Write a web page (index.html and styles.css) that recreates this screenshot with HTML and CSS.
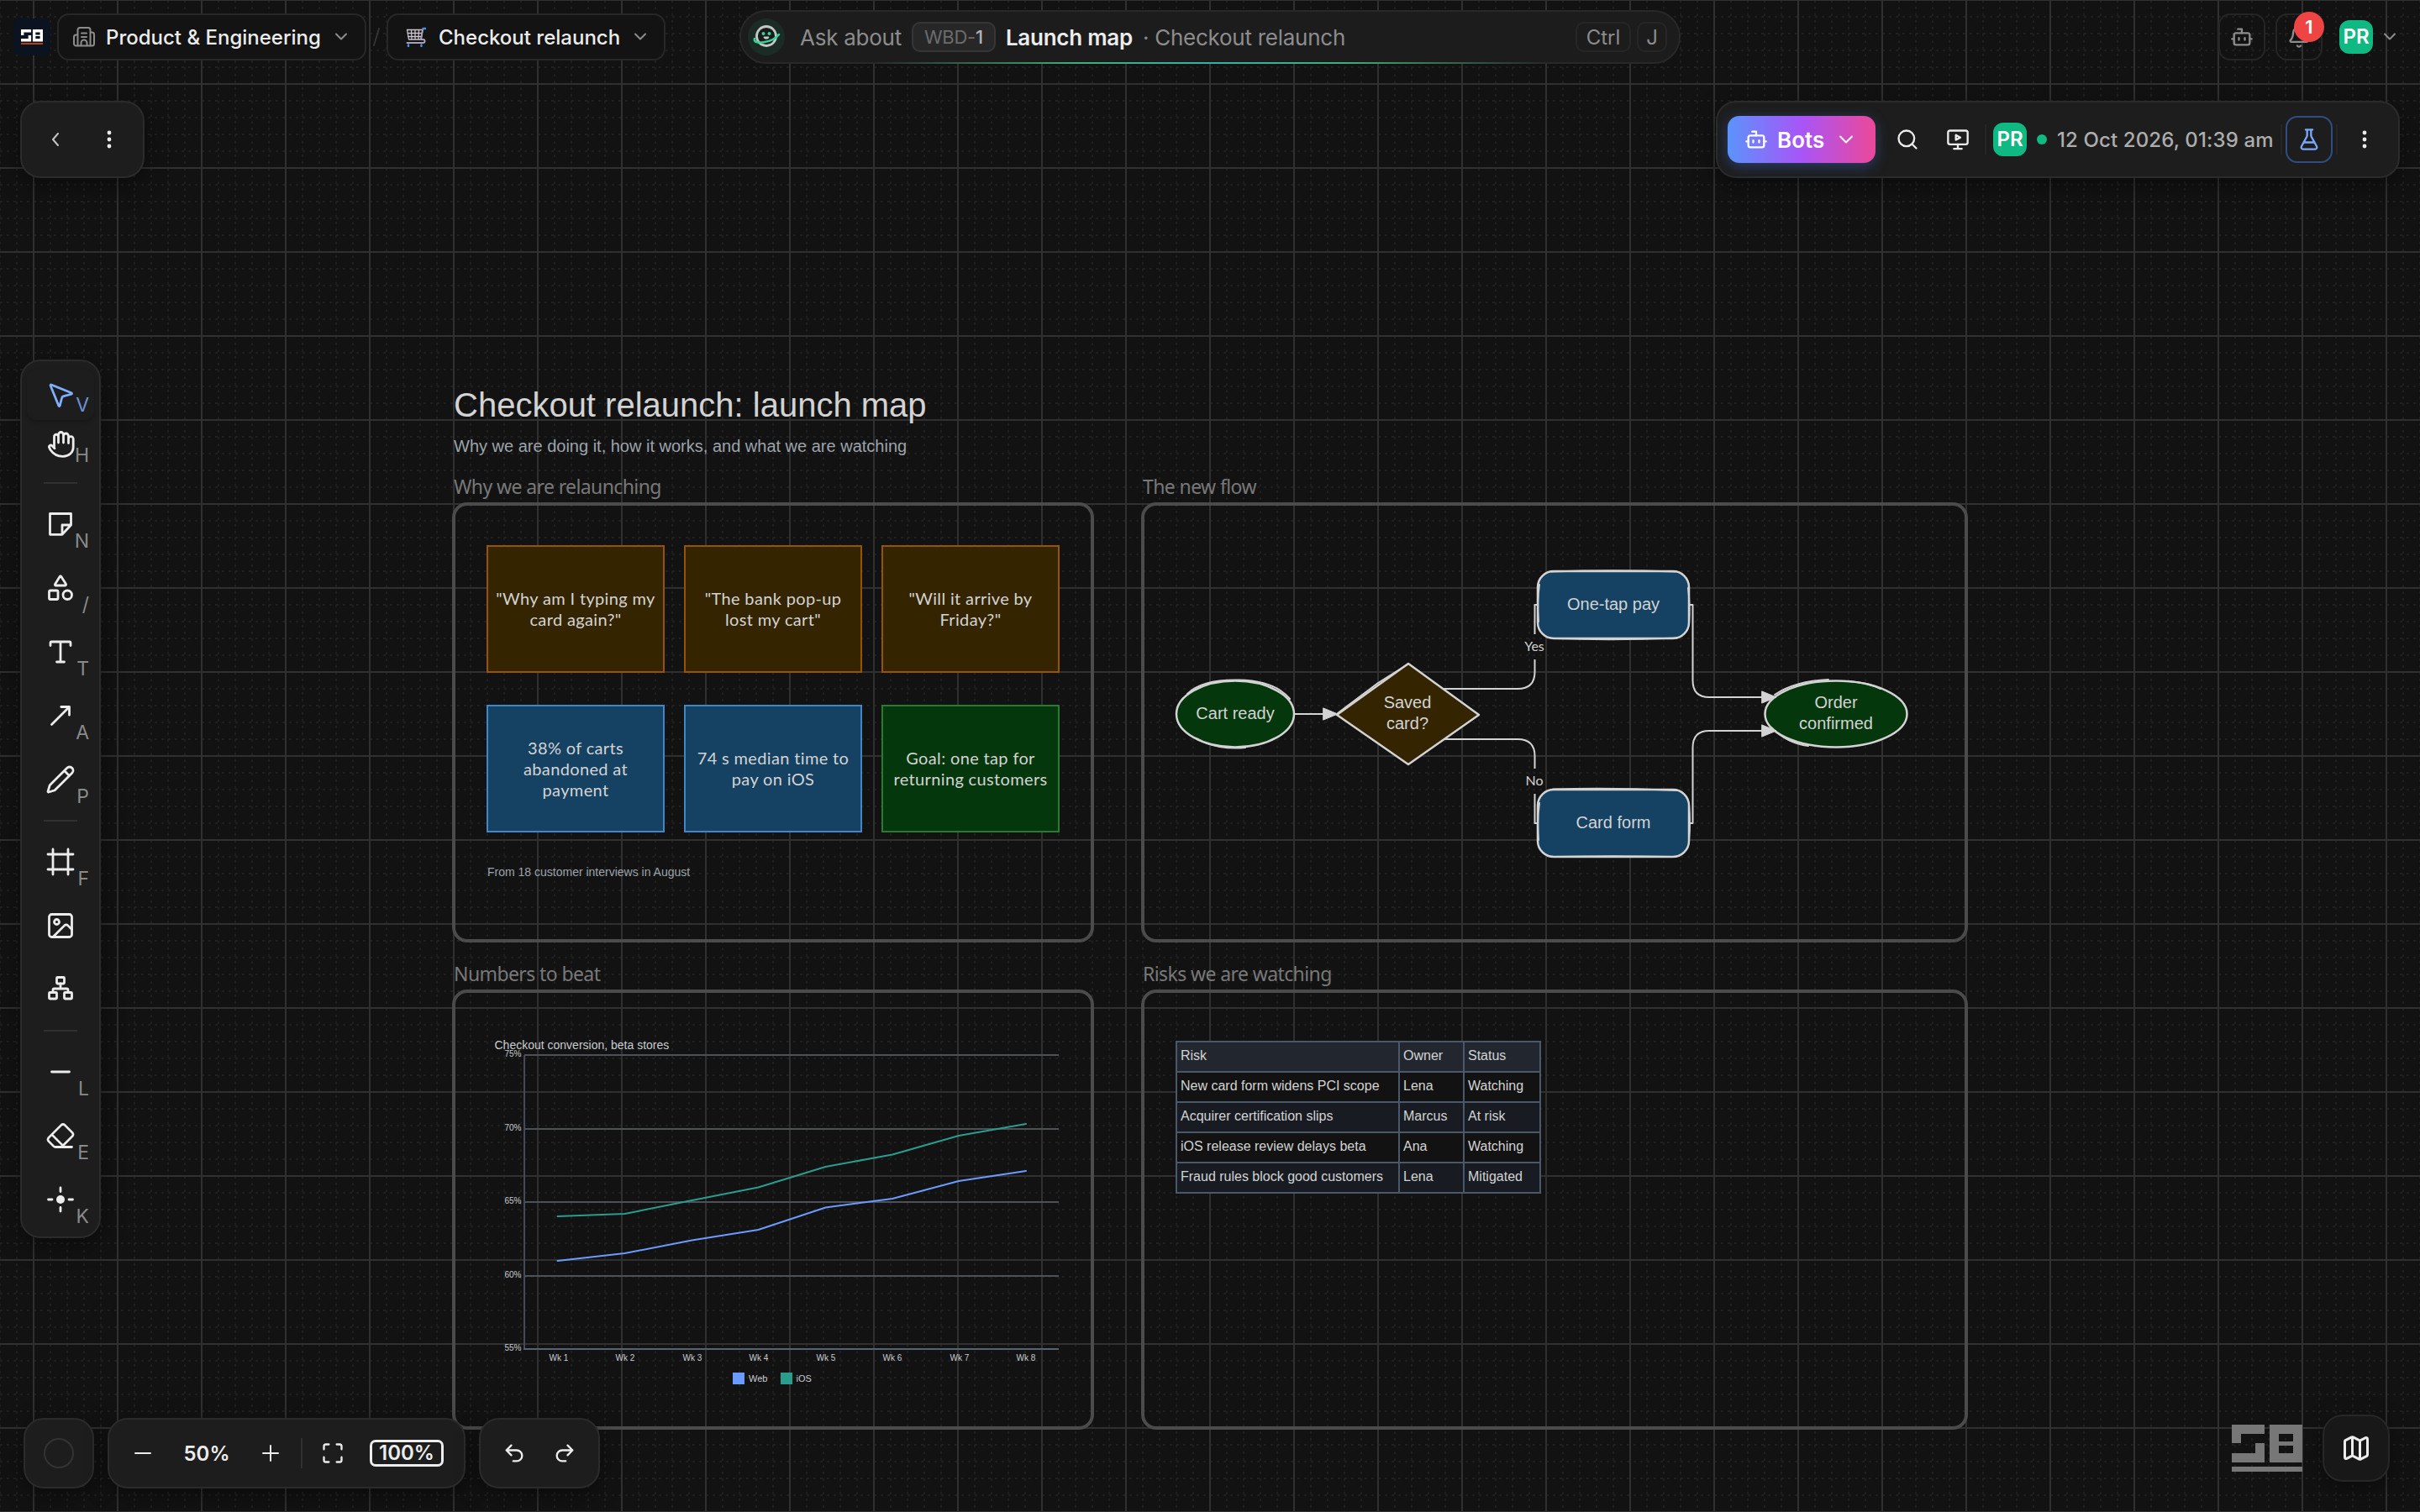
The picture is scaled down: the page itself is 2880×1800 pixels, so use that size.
FILE: index.html
```html
<!DOCTYPE html>
<html lang="en">

<head>
  <meta charset="utf-8">
  <title>Launch map</title>
  <link rel="stylesheet" href="styles.css">
</head>

<body>
  <main class="whiteboard">
    <!-- background grid -->
    <svg class="grid" width="2880" height="1800">
      <defs>
        <pattern id="minor" x="-10" y="-10" width="40" height="40" patternUnits="userSpaceOnUse">
          <path class="grid-minor" d="M10 0V40M30 0V40M0 10H40M0 30H40" />
        </pattern>
        <pattern id="major" x="-10" y="-50" width="100" height="100" patternUnits="userSpaceOnUse">
          <path class="grid-major" d="M50 0V100M0 50H100" />
        </pattern>
      </defs>
      <rect class="grid-fill" width="2880" height="1800" fill="url(#minor)" />
      <rect class="grid-fill" width="2880" height="1800" fill="url(#major)" />
    </svg>

    <!-- board content -->
    <h1 class="board-title">Checkout relaunch: launch map</h1>
    <p class="board-subtitle">Why we are doing it, how it works, and what we are watching</p>

    <section class="frame frame-why">
      <h2 class="frame-name">Why we are relaunching</h2>
      <div class="notes">
        <div class="note note-orange">"Why am I typing my<br>card again?"</div>
        <div class="note note-orange">"The bank pop-up<br>lost my cart"</div>
        <div class="note note-orange">"Will it arrive by<br>Friday?"</div>
        <div class="note note-blue">38% of carts<br>abandoned at<br>payment</div>
        <div class="note note-blue">74 s median time to<br>pay on iOS</div>
        <div class="note note-green">Goal: one tap for<br>returning customers</div>
      </div>
      <p class="caption">From 18 customer interviews in August</p>
    </section>

    <section class="frame frame-flow">
      <h2 class="frame-name">The new flow</h2>
      <svg class="flow" width="920" height="380" viewBox="1380 660 920 380">
        <g class="edges">
          <path d="M1541 850H1578" />
          <path d="M1718 820H1806Q1826.500 820 1826.500 800V785M1826.500 755V720H1831" />
          <path d="M1718 880H1806Q1826.500 880 1826.500 900V915M1826.500 945V980H1831" />
          <path d="M2009 720H2014.500V810Q2014.500 830 2034 830H2098" />
          <path d="M2009 980H2014.500V890Q2014.500 870 2034 870H2098" />
        </g>
        <g class="shapes">
          <ellipse class="fill-green" cx="1470" cy="850" rx="70" ry="39.500" />
          <path class="sketch" d="M1413 826C1426 813 1448 809 1474 809.500S1522 816 1535 832M1424 879C1440 889 1462 892 1482 890" />
          <path class="fill-brown" d="M1676 790L1760 851L1676 910L1591 851Z" />
          <path class="sketch" d="M1592 849L1640 813L1675 791" />
          <rect class="fill-blue" x="1830" y="680" width="180" height="80" rx="19" />
          <path class="sketch" d="M1846 680.500Q1920 678 1994 680.500M1850 760Q1920 762.500 1996 759.500M1831 740Q1829 716 1832 696M2010 742Q2011.500 720 2009 700" />
          <rect class="fill-blue" x="1830" y="940" width="180" height="80" rx="19" />
          <path class="sketch" d="M1848 939.500Q1920 937.500 1996 941M1850 1020Q1920 1018.500 1990 1020M1831 1000Q1829 976 1832 956M2010 1000Q2012 980 2010 958" />
          <ellipse class="fill-green" cx="2185" cy="850" rx="84.500" ry="39.500" />
          <path class="sketch" d="M2112 827C2130 815 2152 810 2176 809M2200 811C2214 812 2228 815 2238 820M2108 866C2122 880 2136 886 2152 888" />
        </g>
        <g class="heads">
          <path d="M1575 843L1592 850L1575 857Z" />
          <path d="M2097 823L2114 830L2097 837Z" />
          <path d="M2097 863L2114 870L2097 877Z" />
        </g>
        <g class="labels">
          <text x="1470" y="856">Cart ready</text>
          <text x="1675" y="843">Saved</text>
          <text x="1675" y="868">card?</text>
          <text x="1920" y="726">One-tap pay</text>
          <text x="1920" y="986">Card form</text>
          <text x="2185" y="843">Order</text>
          <text x="2185" y="868">confirmed</text>
          <text class="edge-label" x="1826" y="775">Yes</text>
          <text class="edge-label" x="1826" y="935">No</text>
        </g>
      </svg>
    </section>

    <section class="frame frame-numbers">
      <h2 class="frame-name">Numbers to beat</h2>
      <svg class="chart" width="700" height="430" viewBox="580 1230 700 430">
        <g class="chart-lines">
          <path d="M624 1256H1260M624 1344H1260M624 1431H1260M624 1519H1260" />
          <path class="axis-y" d="M624 1256V1606" />
          <path class="axis-x" d="M623 1606H1260" />
        </g>
        <polyline class="series series-ios" points="663.500,1448 743.500,1445 823.500,1429 902.500,1413.500 982.500,1389 1062,1374.500 1141,1352 1221,1338" />
        <polyline class="series series-web" points="663.500,1501 743.500,1492 823.500,1476.500 902.500,1464 982.500,1437.500 1062,1427 1141,1406 1221,1394" />
        <text class="chart-title" x="588.500" y="1249">Checkout conversion, beta stores</text>
        <g class="ticks-y">
          <text x="620.500" y="1258">75%</text>
          <text x="620.500" y="1346">70%</text>
          <text x="620.500" y="1433">65%</text>
          <text x="620.500" y="1521">60%</text>
          <text x="620.500" y="1608">55%</text>
        </g>
        <g class="ticks-x">
          <text x="665" y="1620">Wk 1</text>
          <text x="744" y="1620">Wk 2</text>
          <text x="824" y="1620">Wk 3</text>
          <text x="903" y="1620">Wk 4</text>
          <text x="983" y="1620">Wk 5</text>
          <text x="1062" y="1620">Wk 6</text>
          <text x="1142" y="1620">Wk 7</text>
          <text x="1221" y="1620">Wk 8</text>
        </g>
        <rect class="swatch-web" x="872" y="1634" width="14" height="14" />
        <text class="legend" x="891" y="1645">Web</text>
        <rect class="swatch-ios" x="929" y="1634" width="14" height="14" />
        <text class="legend" x="947.500" y="1645">iOS</text>
      </svg>
    </section>

    <section class="frame frame-risks">
      <h2 class="frame-name">Risks we are watching</h2>
      <table class="risks">
        <colgroup>
          <col class="col-risk">
          <col class="col-owner">
          <col class="col-status">
        </colgroup>
        <tr><th>Risk</th><th>Owner</th><th>Status</th></tr>
        <tr><td>New card form widens PCI scope</td><td>Lena</td><td>Watching</td></tr>
        <tr><td>Acquirer certification slips</td><td>Marcus</td><td>At risk</td></tr>
        <tr><td>iOS release review delays beta</td><td>Ana</td><td>Watching</td></tr>
        <tr><td>Fraud rules block good customers</td><td>Lena</td><td>Mitigated</td></tr>
      </table>
    </section>

    <!-- top bar -->
    <header class="topbar">
      <div class="crumbs">
        <div class="logo">
          <svg width="26" height="18" viewBox="0 0 84 56" preserveAspectRatio="none">
            <path fill="#fff" fill-rule="evenodd" d="M0 0H39V11H11V22H0ZM28 22H39V45H0V34H28ZM45 0H84V45H45ZM56 11V20H73V11ZM56 25V34H73V25Z" />
            <path fill="#c2410c" d="M0 50H84V56H0Z" />
          </svg>
        </div>
        <button class="crumb crumb-org">
          <svg class="muted" width="26" height="24" viewBox="0 0 26 24">
            <path d="M5.500 22.500V3.500A2.500 2.500 0 0 1 8 1H18a2.500 2.500 0 0 1 2.500 2.500v19M5.500 9.500h-2A2.500 2.500 0 0 0 1 12v8a2.500 2.500 0 0 0 2.500 2.500h19A2.500 2.500 0 0 0 25 20V9a2.500 2.500 0 0 0-2.500-2.500h-2M10 7.500h6M10 12h6M9.500 22.500V19a3 3 0 0 1 7 0v3.500" />
          </svg>
          <span>Product &amp; Engineering</span>
          <svg class="muted chevron" width="16" height="10" viewBox="0 0 16 10"><path d="M2 1.500L8 7.500L14 1.500" /></svg>
        </button>
        <svg class="slash" width="8" height="22" viewBox="0 0 8 22"><path d="M7 1L1 21" /></svg>
        <button class="crumb crumb-project">
          <svg class="cart" width="24" height="24" viewBox="0 0 24 24">
            <path stroke="#c9c4cf" d="M1.500 3.500H20L18 15H3.500ZM2 7.500h17M2.500 11.500h16M6.500 3.500l.5 11.500M11 3.500V15M15.500 3.500L15 15" />
            <path stroke="#a9a0b8" stroke-width="2" d="M20 3.500L18 15h2.500a1.500 1.500 0 0 1 0 4H1.500" />
            <path stroke="#4a90e2" stroke-width="2.400" d="M20.500 2h3M3 21.500v1.500M18.500 21.500v1.500" />
          </svg>
          <span>Checkout relaunch</span>
          <svg class="muted chevron" width="16" height="10" viewBox="0 0 16 10"><path d="M2 1.500L8 7.500L14 1.500" /></svg>
        </button>
      </div>

      <div class="ask">
        <svg class="mascot" width="44" height="44" viewBox="0 0 44 44">
          <circle cx="22" cy="22" r="22" fill="#1b2c26" stroke="none" />
          <circle cx="22" cy="21" r="11.500" fill="#171c1a" stroke="#c4c9c7" stroke-width="2.800" />
          <path stroke="#34d399" stroke-width="2.500" d="M8 24C5 32 30 29 37 19" />
          <circle cx="18.500" cy="18" r="2" fill="#34d399" stroke="none" />
          <circle cx="25.500" cy="18" r="2" fill="#34d399" stroke="none" />
          <path stroke="#c4c9c7" stroke-width="1.800" d="M19.500 22.500a2.800 2.500 0 0 0 5 0Z" />
        </svg>
        <span class="ask-hint">Ask about</span>
        <span class="ask-chip">WBD-<b>1</b></span>
        <span class="ask-name">Launch map</span>
        <span class="ask-hint ask-project">· Checkout relaunch</span>
        <kbd class="kbd kbd-ctrl">Ctrl</kbd>
        <kbd class="kbd kbd-j">J</kbd>
      </div>

      <div class="account">
        <button class="icon-btn">
          <svg class="muted" width="28" height="28" viewBox="0 0 24 24"><path d="M12 8V4H8M2 14h2M20 14h2M15 13v2M9 13v2" /><rect x="4" y="8" width="16" height="12" rx="2" /></svg>
        </button>
        <button class="icon-btn icon-btn-bell">
          <svg class="muted" width="28" height="28" viewBox="0 0 24 24"><path d="M10.270 21a2 2 0 0 0 3.460 0M3.260 15.330A1 1 0 0 0 4 17h16a1 1 0 0 0 .74-1.670C19.410 13.960 18 12.500 18 8A6 6 0 0 0 6 8c0 4.500-1.410 5.960-2.740 7.330" /></svg>
          <span class="badge">1</span>
        </button>
        <span class="avatar">PR</span>
        <svg class="muted" width="16" height="10" viewBox="0 0 16 10"><path d="M2 1.500L8 7.500L14 1.500" /></svg>
      </div>
    </header>

    <!-- floating panels -->
    <div class="panel panel-back">
      <svg class="soft" width="12" height="18" viewBox="0 0 12 18"><path d="M9 2L3 9L9 16" /></svg>
      <svg class="dots" width="6" height="24" viewBox="0 0 6 24"><circle cx="3" cy="4" r="2.400" /><circle cx="3" cy="12" r="2.400" /><circle cx="3" cy="20" r="2.400" /></svg>
    </div>

    <div class="panel panel-actions">
      <button class="bots">
        <svg width="28" height="28" viewBox="0 0 24 24"><path d="M12 8V4H8M2 14h2M20 14h2M15 13v2M9 13v2" /><rect x="4" y="8" width="16" height="12" rx="2" /></svg>
        <span>Bots</span>
        <svg width="18" height="11" viewBox="0 0 18 11"><path d="M2 1.500L9 8.500L16 1.500" /></svg>
      </button>
      <i class="divider"></i>
      <svg class="act-search" width="28" height="28" viewBox="0 0 24 24"><circle cx="11" cy="11" r="8" /><path d="M21 21l-4.300-4.300" /></svg>
      <svg class="act-present" width="28" height="28" viewBox="0 0 24 24"><rect x="2" y="3" width="20" height="14" rx="2" /><path d="M10 7.500v5l4.500-2.500ZM12 17v4M8 21.500h8" /></svg>
      <i class="divider"></i>
      <span class="avatar">PR</span>
      <span class="online"></span>
      <time class="stamp">12 Oct 2026, 01:39 am</time>
      <i class="divider"></i>
      <button class="lab">
        <svg width="28" height="28" viewBox="0 0 24 24"><path d="M14 2v6a2 2 0 0 0 .245.960l5.510 10.080A2 2 0 0 1 18 22H6a2 2 0 0 1-1.755-2.960l5.510-10.080A2 2 0 0 0 10 8V2M6.453 15h11.094M8.500 2h7" /></svg>
      </button>
      <i class="divider"></i>
      <svg class="dots" width="6" height="24" viewBox="0 0 6 24"><circle cx="3" cy="4" r="2.400" /><circle cx="3" cy="12" r="2.400" /><circle cx="3" cy="20" r="2.400" /></svg>
    </div>

    <nav class="panel tools">
      <button class="tool tool-short tool-active">
        <svg width="36" height="36" viewBox="0 0 24 24"><path d="M4.037 4.688a.495.495 0 0 1 .651-.651l16 6.500a.5.5 0 0 1-.063.947l-6.124 1.580a2 2 0 0 0-1.438 1.435l-1.579 6.126a.5.5 0 0 1-.947.063z" /></svg>
        <span class="key">V</span>
      </button>
      <button class="tool tool-short">
        <svg class="px" width="36" height="36" viewBox="0 0 36 36"><path d="M10.500 21.500V8a2.400 2.400 0 0 1 5-.5V15M15.500 7.500V5.500a3 3 0 0 1 6 0V15M21.500 7a3 3 0 0 1 6 0v8.500M27.500 10.500a2.800 2.800 0 0 1 5.700 0V20c0 7-5.500 11.300-12.200 11.300C13 31.300 9 28 6 23.500L4.800 21.200c-1.300-2.600 1.500-4.200 3.200-2.500l3 3" /></svg>
        <span class="key">H</span>
      </button>
      <hr>
      <button class="tool">
        <svg class="px" width="36" height="36" viewBox="0 0 36 36"><path d="M5.500 5.500H30.500V19L20 30.300H5.500ZM30.500 19H20V30" /></svg>
        <span class="key">N</span>
      </button>
      <button class="tool">
        <svg width="36" height="36" viewBox="0 0 24 24"><path d="M8.300 10a.7.7 0 0 1-.626-1.079L11.400 3a.7.7 0 0 1 1.198-.043L16.300 8.900a.7.7 0 0 1-.572 1.100Z" /><rect x="3" y="14" width="7" height="7" rx="1" /><circle cx="17.500" cy="17.500" r="3.500" /></svg>
        <span class="key">/</span>
      </button>
      <button class="tool">
        <svg width="36" height="36" viewBox="0 0 24 24"><path d="M4 7V5a1 1 0 0 1 1-1h14a1 1 0 0 1 1 1v2M9 20h6M12 4v16" /></svg>
        <span class="key">T</span>
      </button>
      <button class="tool">
        <svg class="px" width="36" height="36" viewBox="0 0 36 36"><path d="M7.500 28.500L28.500 7.500M18.800 7.500H28.500V17.200" /></svg>
        <span class="key">A</span>
      </button>
      <button class="tool">
        <svg width="36" height="36" viewBox="0 0 24 24"><path d="M21.174 6.812a1 1 0 0 0-3.986-3.987L3.842 16.174a2 2 0 0 0-.5.830l-1.321 4.352a.5.5 0 0 0 .623.622l4.353-1.320a2 2 0 0 0 .830-.497zM15 5l4 4" /></svg>
        <span class="key">P</span>
      </button>
      <hr>
      <button class="tool">
        <svg width="36" height="36" viewBox="0 0 24 24"><path d="M22 6H2M22 18H2M6 2v20M18 2v20" /></svg>
        <span class="key">F</span>
      </button>
      <button class="tool">
        <svg width="36" height="36" viewBox="0 0 24 24"><rect x="3" y="3" width="18" height="18" rx="2" /><circle cx="9" cy="9" r="2" /><path d="M21 15l-3.086-3.086a2 2 0 0 0-2.828 0L6 21" /></svg>
      </button>
      <button class="tool">
        <svg class="px" width="36" height="36" viewBox="0 0 36 36"><rect x="13.500" y="3.500" width="9" height="7.500" rx="1" /><rect x="4.500" y="21.500" width="9" height="7.500" rx="1" /><rect x="22.500" y="21.500" width="9" height="7.500" rx="1" /><path d="M9 21.500V18.500a1.500 1.500 0 0 1 1.500-1.500h15a1.500 1.500 0 0 1 1.500 1.500v3M18 11v6" /></svg>
      </button>
      <hr>
      <button class="tool">
        <svg class="px" width="36" height="36" viewBox="0 0 36 36"><path d="M7.500 18H28.500" /></svg>
        <span class="key">L</span>
      </button>
      <button class="tool">
        <svg width="36" height="36" viewBox="0 0 24 24"><path d="M21 21H8a2 2 0 0 1-1.420-.587l-3.994-3.999a2 2 0 0 1 0-2.828l10-10a2 2 0 0 1 2.829 0l5.999 6a2 2 0 0 1 0 2.828L12.834 21M5.082 11.090l8.828 8.828" /></svg>
        <span class="key">E</span>
      </button>
      <button class="tool">
        <svg class="px" width="36" height="36" viewBox="0 0 36 36"><circle class="solid" cx="18" cy="18" r="5" /><path d="M18 4v4.500M18 27.500V32M3.500 18H8M28 18h4.500" /></svg>
        <span class="key">K</span>
      </button>
    </nav>

    <footer class="bottombar">
      <div class="panel panel-ring"><span class="ring"></span></div>
      <div class="panel panel-zoom">
        <svg class="zoom-out" width="22" height="22" viewBox="0 0 22 22"><path d="M2 11H20" /></svg>
        <span class="zoom-value">50%</span>
        <svg class="zoom-in" width="22" height="22" viewBox="0 0 22 22"><path d="M2 11H20M11 2V20" /></svg>
        <i class="divider"></i>
        <svg class="fit" width="28" height="28" viewBox="0 0 24 24"><path d="M8 3H5a2 2 0 0 0-2 2v3M21 8V5a2 2 0 0 0-2-2h-3M3 16v3a2 2 0 0 0 2 2h3M16 21h3a2 2 0 0 0 2-2v-3" /></svg>
        <span class="full">100%</span>
      </div>
      <div class="panel panel-history">
        <svg width="28" height="28" viewBox="0 0 24 24"><path d="M9 14L4 9l5-5M4 9h10.500a5.500 5.500 0 0 1 0 11H11" /></svg>
        <svg width="28" height="28" viewBox="0 0 24 24"><path d="M15 14l5-5-5-5M20 9H9.500a5.500 5.500 0 0 0 0 11H13" /></svg>
      </div>
    </footer>

    <div class="corner">
      <svg width="84" height="56" viewBox="0 0 84 56">
        <path class="mark" fill-rule="evenodd" d="M0 0H39V11H11V22H0ZM28 22H39V45H0V34H28ZM45 0H84V45H45ZM56 11V20H73V11ZM56 25V34H73V25ZM0 50H84V56H0Z" />
      </svg>
      <button class="panel panel-map">
        <svg width="36" height="36" viewBox="0 0 24 24"><path d="M14.106 5.553a2 2 0 0 0 1.788 0l3.659-1.830A1 1 0 0 1 21 4.619v12.764a1 1 0 0 1-.553.894l-4.553 2.277a2 2 0 0 1-1.788 0l-4.212-2.106a2 2 0 0 0-1.788 0l-3.659 1.830A1 1 0 0 1 3 19.381V6.618a1 1 0 0 1 .553-.894l4.553-2.277a2 2 0 0 1 1.788 0zM15 5.764v15M9 3.236v15" /></svg>
      </button>
    </div>
  </main>
</body>

</html>
```
FILE: styles.css
```css
html,
body {
  margin: 0;
  padding: 0;
}

body {
  width: 2880px;
  height: 1800px;
  overflow: hidden;
  background-color: #121212;
  color: #ececec;
  font-family: Inter, sans-serif;
}

* {
  box-sizing: border-box;
}

.whiteboard {
  position: relative;
  width: 2880px;
  height: 1800px;
  overflow: hidden;
}

button {
  margin: 0;
  padding: 0;
  border: none;
  background: none;
  color: inherit;
  font: inherit;
}

svg {
  display: block;
  flex: none;
  fill: none;
  stroke: #ececec;
  stroke-width: 2;
  stroke-linecap: round;
  stroke-linejoin: round;
}

.muted {
  stroke: #8c8c8c;
}

.soft {
  stroke: #c4c4c4;
}

.dots {
  fill: #ececec;
  stroke: none;
}

/* Grid */
.grid {
  position: absolute;
  left: 0;
  top: 0;
  stroke-linecap: butt;
}

.grid-fill {
  stroke: none;
}

.grid-minor {
  stroke: #1f1f1f;
  stroke-width: 2;
  stroke-dasharray: 3 5;
  stroke-dashoffset: 6;
}

.grid-major {
  stroke: #303030;
  stroke-width: 2;
}

/* Board */
.board-title,
.board-subtitle {
  position: absolute;
  left: 540px;
  margin: 0;
  font-family: "Liberation Sans", Arial, sans-serif;
  font-weight: 400;
  white-space: nowrap;
}

.board-title {
  top: 459px;
  font-size: 40px;
  line-height: 46px;
  color: #d3d3d3;
}

.board-subtitle {
  top: 519px;
  font-size: 20px;
  line-height: 24px;
  color: #9da3ab;
}

.frame {
  position: absolute;
  height: 524px;
  border: 4px solid #4b4b4b;
  border-radius: 18px;
}

.frame-why {
  left: 538px;
  top: 598px;
  width: 764px;
  padding: 47px 37px;
}

.frame-flow {
  left: 1358px;
  top: 598px;
  width: 984px;
  padding: 58px 18px;
}

.frame-numbers {
  left: 538px;
  top: 1178px;
  width: 764px;
  padding: 48px 38px;
}

.frame-risks {
  left: 1358px;
  top: 1178px;
  width: 984px;
  padding: 57px 37px;
}

.frame-name {
  position: absolute;
  left: -2px;
  top: -37px;
  margin: 0;
  font-family: "Noto Sans", sans-serif;
  font-size: 23px;
  font-weight: 400;
  line-height: 28px;
  letter-spacing: -0.6px;
  color: #787878;
  white-space: nowrap;
}

.notes {
  display: grid;
  grid-template-columns: repeat(3, 212px);
  grid-auto-rows: 152px;
  gap: 38px 23px;
}

.note {
  display: flex;
  align-items: center;
  justify-content: center;
  border: 2px solid;
  color: #d3d3d3;
  font-family: Lato, sans-serif;
  font-size: 20px;
  line-height: 25px;
  letter-spacing: 0.35px;
  text-align: center;
  white-space: nowrap;
}

.note-orange {
  background-color: #342500;
  border-color: #965300;
}

.note-blue {
  background-color: #154162;
  border-color: #4086c8;
}

.note-green {
  background-color: #04380c;
  border-color: #297a35;
}

.caption {
  margin: 39px 0 0 1px;
  color: #9da3ab;
  font-family: "Liberation Sans", Arial, sans-serif;
  font-size: 14px;
  line-height: 16px;
}

/* Flow diagram */
.flow,
.chart {
  font-family: "Liberation Sans", Arial, sans-serif;
  overflow: visible;
}

.edges {
  stroke: #d3d3d3;
  stroke-width: 2;
  stroke-linecap: butt;
}

.shapes {
  stroke: #d3d3d3;
  stroke-width: 2.5;
}

.sketch {
  fill: none;
  stroke-width: 2;
}

.heads {
  fill: #d3d3d3;
  stroke: #d3d3d3;
  stroke-width: 1;
}

.fill-green {
  fill: #04380c;
}

.fill-brown {
  fill: #342500;
}

.fill-blue {
  fill: #154162;
}

.labels {
  fill: #d3d3d3;
  stroke: none;
  font-size: 20px;
  text-anchor: middle;
}

.edge-label {
  font-family: Lato, sans-serif;
  font-size: 16px;
}

/* Chart */
.chart text {
  fill: #c9ccd0;
  stroke: none;
}

.chart-lines {
  stroke: #4d5056;
  stroke-width: 2;
  stroke-linecap: butt;
}

.axis-y {
  stroke: #444a59;
}

.axis-x {
  stroke: #566171;
}

.series {
  stroke-width: 2;
}

.series-ios {
  stroke: #2a9d8f;
}

.series-web {
  stroke: #6b9bff;
}

.swatch-web {
  fill: #6b9bff;
  stroke: none;
}

.swatch-ios {
  fill: #2a9d8f;
  stroke: none;
}

.chart-title {
  font-size: 14px;
}

.ticks-y {
  font-size: 10px;
  text-anchor: end;
}

.ticks-x {
  font-size: 10px;
  text-anchor: middle;
}

.legend {
  font-size: 11px;
}

/* Risks table */
.risks {
  width: 435px;
  table-layout: fixed;
  border-collapse: collapse;
  background-color: #121212;
  color: #d3d3d3;
  font-family: "Liberation Sans", Arial, sans-serif;
  font-size: 16px;
}

.col-risk {
  width: 265px;
}

.col-owner {
  width: 77px;
}

.col-status {
  width: 91px;
}

.risks th,
.risks td {
  height: 36px;
  padding: 0 0 2px 4px;
  border: 2px solid #4b586a;
  font-weight: 400;
  line-height: 32px;
  text-align: left;
  white-space: nowrap;
}

.risks tr:nth-child(odd) {
  background-color: #181c22;
}

.risks tr:nth-child(even) {
  background-color: #121212;
}

.risks tr:first-child {
  background-color: #22272f;
}

/* Top bar */
.topbar {
  position: absolute;
  left: 0;
  top: 0;
  width: 100%;
  height: 88px;
  padding: 0 28px 0 16px;
  display: flex;
  align-items: center;
  justify-content: space-between;
}

.crumbs,
.account {
  display: flex;
  align-items: center;
}

.logo {
  display: flex;
  align-items: center;
  justify-content: center;
  width: 44px;
  height: 44px;
  margin-right: 8px;
  border-radius: 8px;
  background-color: #0b1220;
}

.logo svg {
  stroke: none;
}

.crumb {
  display: flex;
  align-items: center;
  height: 56px;
  padding: 0 20px 0 17px;
  border: 2px solid #272727;
  border-radius: 14px;
  background-color: #131313;
  font-size: 24px;
  font-weight: 500;
  white-space: nowrap;
}

.crumb span {
  margin-left: 13px;
}

.crumb-org {
  width: 368px;
}

.crumb-project {
  width: 332px;
  padding-left: 21px;
}

.crumb-project span {
  margin-left: 15px;
}

.chevron {
  margin-left: auto;
}

.slash {
  margin: 0 8px;
  stroke: #333;
}

.cart {
  stroke-width: 1.3;
}

.ask {
  position: absolute;
  left: 880px;
  top: 12px;
  display: flex;
  align-items: center;
  width: 1120px;
  height: 64px;
  padding: 0 14px 0 8px;
  border: 2px solid #282828;
  border-radius: 32px;
  background-color: #1c1c1c;
  font-size: 26px;
  letter-spacing: -0.01em;
  white-space: nowrap;
}

/* glow line under the ask field */
.ask::after {
  content: "";
  position: absolute;
  left: 160px;
  right: 160px;
  bottom: -2px;
  height: 2px;
  background: linear-gradient(90deg, transparent, #3fae7c 30%, #2db5a3 50%, #3fae7c 70%, transparent);
}

.mascot {
  margin-right: 18px;
}

.ask-hint {
  color: #8c8c8c;
}

.ask-chip {
  display: flex;
  align-items: center;
  justify-content: center;
  width: 100px;
  height: 36px;
  margin: 0 12px;
  border: 2px solid #363636;
  border-radius: 10px;
  background-color: #272727;
  color: #6c6c6c;
  font-size: 22px;
}

.ask-chip b {
  color: #b4b4b4;
  font-weight: 500;
}

.ask-name {
  font-weight: 600;
}

.ask-project {
  margin-left: 12px;
}

.kbd {
  display: flex;
  align-items: center;
  justify-content: center;
  height: 36px;
  border: 2px solid #262626;
  border-radius: 10px;
  color: #8c8c8c;
  font-family: inherit;
  font-size: 24px;
  letter-spacing: 0;
}

.kbd-ctrl {
  width: 66px;
  margin-left: auto;
}

.kbd-j {
  width: 36px;
  margin-left: 7px;
}

.icon-btn {
  position: relative;
  display: flex;
  align-items: center;
  justify-content: center;
  width: 56px;
  height: 56px;
  border: 2px solid #252525;
  border-radius: 14px;
}

.icon-btn-bell {
  margin: 0 20px 0 12px;
}

.badge {
  position: absolute;
  top: -4px;
  right: -4px;
  width: 36px;
  height: 36px;
  border-radius: 50%;
  background-color: #ef4444;
  color: #fff;
  font-size: 22px;
  font-weight: 600;
  line-height: 36px;
  text-align: center;
}

.avatar {
  width: 40px;
  height: 40px;
  border-radius: 12px;
  background-color: #10b981;
  color: #fff;
  font-size: 24px;
  font-weight: 600;
  line-height: 40px;
  text-align: center;
}

.account .avatar {
  margin-right: 12px;
}

/* Panels */
.panel {
  display: flex;
  align-items: center;
  border: 2px solid #2b2b2b;
  border-radius: 24px;
  background-color: #1d1d1d;
  box-shadow: 0 8px 28px rgba(0, 0, 0, 0.4);
}

.divider {
  width: 2px;
  height: 36px;
  background-color: #262626;
}

.panel-back {
  position: absolute;
  left: 24px;
  top: 120px;
  width: 148px;
  height: 92px;
  padding: 0 37px 0 34px;
  justify-content: space-between;
}

.panel-actions {
  position: absolute;
  left: 2042px;
  top: 120px;
  width: 814px;
  height: 92px;
  padding-left: 12px;
}

.bots {
  display: flex;
  align-items: center;
  width: 176px;
  height: 56px;
  margin-right: 4px;
  padding-left: 20px;
  border-radius: 14px;
  background: linear-gradient(90deg, #5b93fb, #a855f7 50%, #ec4899);
  box-shadow: 0 4px 16px rgba(59, 110, 220, 0.4);
  color: #fff;
  font-size: 26px;
  font-weight: 600;
}

.bots svg {
  stroke: #fff;
}

.bots span {
  margin: 0 17px 0 11px;
}

.act-search {
  margin: 0 32px 0 18px;
}

.act-present {
  margin-right: 18px;
}

.panel-actions .avatar {
  margin-left: 8px;
}

.online {
  width: 12px;
  height: 12px;
  margin: 0 12px;
  border-radius: 50%;
  background-color: #10b981;
}

.stamp {
  width: 266px;
  color: #adadad;
  font-size: 24px;
  font-weight: 500;
  letter-spacing: 0.12px;
  white-space: nowrap;
}

.lab {
  display: flex;
  align-items: center;
  justify-content: center;
  width: 56px;
  height: 56px;
  margin: 0 4px;
  border: 2px solid #2f4d7e;
  border-radius: 14px;
}

.lab svg {
  stroke: #7aa9fb;
}

.panel-actions .dots {
  margin-left: 29px;
}

/* Tools */
.tools {
  position: absolute;
  left: 24px;
  top: 428px;
  width: 96px;
  height: 1046px;
  padding: 10px 0 6px;
  flex-direction: column;
}

.tools hr {
  width: 40px;
  height: 2px;
  margin: 10px 0;
  border: none;
  background-color: #303030;
}

.tool {
  position: relative;
  display: flex;
  align-items: center;
  justify-content: center;
  width: 80px;
  height: 76px;
  flex: none;
}

.tool-short {
  height: 60px;
}

.tool-short + hr {
  margin-top: 14px;
}

.tool-active {
  border-radius: 12px;
  box-shadow: 0 2px 4px rgba(0, 0, 0, 0.25);
}

.tool svg {
  stroke-width: 1.85;
}

.tool .px {
  stroke-width: 2.8;
}

.tool .solid {
  fill: #ececec;
  stroke: none;
}

.key {
  position: absolute;
  right: 6px;
  bottom: 7px;
  color: #8a8a8a;
  font-size: 23px;
  line-height: 22px;
}

.tool-active svg {
  stroke: #7fb0ff;
}

.tool-active .key {
  color: #6a92d2;
}

/* Bottom bar */
.bottombar {
  position: absolute;
  left: 28px;
  top: 1688px;
  display: flex;
  gap: 16px;
}

.bottombar .panel {
  height: 84px;
}

.panel-ring {
  width: 84px;
  justify-content: center;
}

.ring {
  width: 36px;
  height: 36px;
  border: 2px solid #333;
  border-radius: 50%;
}

.panel-zoom {
  width: 426px;
  padding-left: 29px;
  font-size: 24px;
  font-weight: 600;
}

.zoom-value {
  width: 92px;
  margin: 0 19px;
  text-align: center;
}

.panel-zoom .divider {
  margin: 0 22px 0 25px;
  background-color: #303030;
}

.full {
  width: 88px;
  height: 32px;
  margin-left: 30px;
  border: 3px solid #ececec;
  border-radius: 7px;
  line-height: 25px;
  text-align: center;
}

.panel-history {
  width: 144px;
  justify-content: center;
  gap: 32px;
}

.corner {
  position: absolute;
  right: 36px;
  top: 1684px;
  display: flex;
  align-items: center;
  gap: 24px;
}

.mark {
  fill: #777;
  stroke: none;
}

.panel-map {
  width: 80px;
  height: 80px;
  justify-content: center;
  background-color: #181818;
  border-color: #272727;
}
```
